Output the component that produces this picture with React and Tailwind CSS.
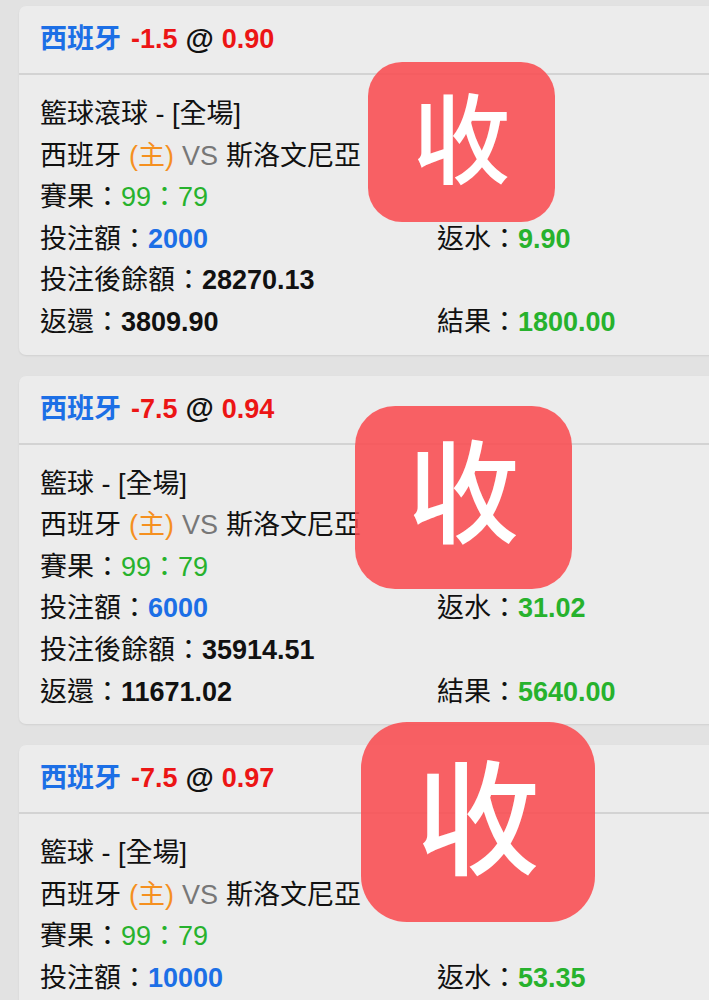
const bets = [
  {
    odds: "-1.5",
    price: "0.90",
    league: "籃球滾球 - [全場]",
    stake: "2000",
    rebate: "9.90",
    balance: "28270.13",
    payout: "3809.90",
    result: "1800.00",
    stamp: { top: "top-[56px]", left: "left-[349px]", size: "w-[187px] h-[160px] rounded-[34px] text-[98px]" },
  },
  {
    odds: "-7.5",
    price: "0.94",
    league: "籃球 - [全場]",
    stake: "6000",
    rebate: "31.02",
    balance: "35914.51",
    payout: "11671.02",
    result: "5640.00",
    stamp: { top: "top-[30px]", left: "left-[336px]", size: "w-[217px] h-[183px] rounded-[40px] text-[112px]" },
  },
  {
    odds: "-7.5",
    price: "0.97",
    league: "籃球 - [全場]",
    stake: "10000",
    rebate: "53.35",
    balance: "40846.86",
    payout: "19753.35",
    result: "9700.00",
    stamp: { top: "top-[-23px]", left: "left-[342px]", size: "w-[234px] h-[200px] rounded-[46px] text-[124px]" },
  },
];

const font = { fontFamily: '"Liberation Sans", "Noto Sans CJK TC", sans-serif' };

const Row = ({ children }) => <div className="flex leading-[41.6px]">{children}</div>;

const BetCard = ({ bet }) => (
  <div className="relative w-[720px] bg-[#ececec] rounded-[7px] shadow-[0_1px_2px_rgba(0,0,0,0.08)]">
    <div className="h-[69px] flex items-center px-[21px] border-b-2 border-[#d3d3d3] text-[27px] font-bold">
      <span className="text-[#1c6fe6]">西班牙</span>
      <span className="text-[#ec1515] ml-[10px]">{bet.odds}</span>
      <span className="text-[#111] ml-[8px] text-[29px]">@</span>
      <span className="text-[#ec1515] ml-[8px]">{bet.price}</span>
    </div>
    <div className="pt-[19px] pb-[11px] px-[21px] text-[27px] text-[#111]">
      <Row>{bet.league}</Row>
      <Row>
        西班牙<span className="text-[#f5901f] ml-[8px]">(主)</span>
        <span className="text-[#777] ml-[8px]">VS</span>
        <span className="ml-[8px]">斯洛文尼亞</span>
      </Row>
      <Row>
        賽果：<span className="text-[#27b22d]">99：79</span>
      </Row>
      <Row>
        <div className="w-[397px]">
          投注額：<span className="font-bold text-[#1c6fe6]">{bet.stake}</span>
        </div>
        <div>
          返水：<span className="font-bold text-[#27b22d]">{bet.rebate}</span>
        </div>
      </Row>
      <Row>
        投注後餘額：<span className="font-bold">{bet.balance}</span>
      </Row>
      <Row>
        <div className="w-[397px]">
          返還：<span className="font-bold">{bet.payout}</span>
        </div>
        <div>
          結果：<span className="font-bold text-[#27b22d]">{bet.result}</span>
        </div>
      </Row>
    </div>
    <div
      className={`absolute ${bet.stamp.top} ${bet.stamp.left} ${bet.stamp.size} bg-[rgba(250,72,76,0.85)] flex items-center justify-center text-white font-medium leading-none`}
    >
      收
    </div>
  </div>
);

export default function App() {
  return (
    <div className="w-[709px] h-[1000px] overflow-hidden bg-[#e2e2e2] pt-[6px] pl-[19px]" style={font}>
      <div className="flex flex-col gap-[21px]">
        {bets.map((bet, i) => (
          <BetCard key={i} bet={bet} />
        ))}
      </div>
    </div>
  );
}
